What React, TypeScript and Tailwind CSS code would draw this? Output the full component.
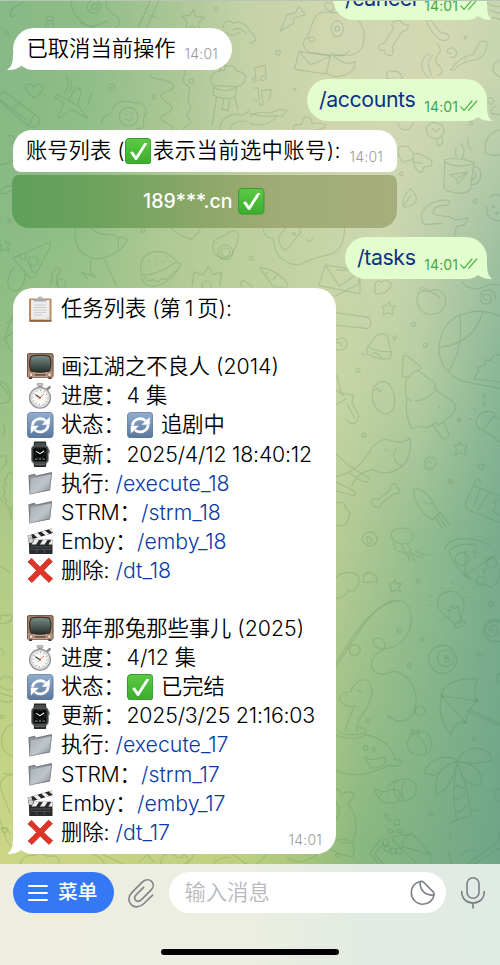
import type { ReactNode } from "react";

const FONT = "font-[Inter,'Noto_Sans_CJK_SC',sans-serif]";

/* ---------- emoji ---------- */

function CheckEmoji() {
  return (
    <svg viewBox="0 0 26 26" className="block size-[26.5px] shrink-0">
      <defs>
        <linearGradient id="ck" x1="0" y1="0" x2="0" y2="1">
          <stop offset="0" stopColor="#5cc944" />
          <stop offset="1" stopColor="#3aae2c" />
        </linearGradient>
      </defs>
      <rect x="0.5" y="0.5" width="25" height="25" rx="3.6" fill="url(#ck)" stroke="#379a35" />
      <path d="M5 14.2 7.6 13l3.2 4.6L19 4.8l3 .3L11.8 21.4 10 21.5Z" fill="#fff" />
    </svg>
  );
}

function RefreshEmoji() {
  return (
    <svg viewBox="0 0 26 26" className="block size-[26.5px] shrink-0">
      <defs>
        <linearGradient id="rf" x1="0" y1="0" x2="0" y2="1">
          <stop offset="0" stopColor="#91aed0" />
          <stop offset="1" stopColor="#59769c" />
        </linearGradient>
      </defs>
      <rect x="0.4" y="0.4" width="25.2" height="25.2" rx="4" fill="url(#rf)" stroke="#5b7698" strokeWidth="0.8" />
      <path d="M5.4 13.2A7.6 7 0 0 1 18.2 8.6M20.6 12.8A7.6 7 0 0 1 7.8 17.6" fill="none" stroke="#fff" strokeWidth="2.7" />
      <path d="M22.3 5v7.6h-8Z M3.7 21.2v-7.6h8Z" fill="#fff" />
    </svg>
  );
}

function ClipboardEmoji() {
  return (
    <svg viewBox="0 0 26 26" className="block size-[26px] shrink-0">
      <rect x="2" y="2.5" width="22.5" height="23" rx="1.2" fill="#b98a5c" />
      <path d="M2.5 25h22" stroke="#6b4a30" strokeWidth="1.2" />
      <path d="M4 4h18.6v19.5H4Z" fill="#ececec" />
      <path d="M4 23.5h14l4.6-4V23.5Z" fill="#d8d8da" />
      <path d="M7 9h12M7 11.5h12M7 14h12M7 16.5h12M7 19h8" stroke="#c9c9cc" strokeWidth="0.9" />
      <path d="M7 5.6V3.4l3.6-.6c.2-3 5-3 5.200 0l3.500.6v2.200Z" fill="#a9adb3" />
      <circle cx="13.200" cy="1.800" r="1" fill="#fff" stroke="#8e9298" strokeWidth="0.500" />
    </svg>
  );
}

function TvEmoji() {
  return (
    <svg viewBox="0 0 26 26" className="block size-[26.5px] shrink-0">
      <defs>
        <linearGradient id="tv" x1="0" y1="0" x2="0" y2="1">
          <stop offset="0" stopColor="#7c9089" />
          <stop offset="0.45" stopColor="#54635f" />
          <stop offset="1" stopColor="#26302e" />
        </linearGradient>
      </defs>
      <rect x="0.4" y="0.6" width="25.200" height="23.400" rx="1.400" fill="#a0806a" stroke="#5d4537" strokeWidth="0.900" />
      <path d="M1 18.500h24v5.400H1Z" fill="#c2a391" />
      <path d="M4 3.200Q13 1 22 3.200 25 10 22 17.600 13 20 4 17.600 1 10 4 3.200Z" fill="url(#tv)" stroke="#33271f" strokeWidth="1" />
      <circle cx="4" cy="21.300" r="1.900" fill="#efd9c8" stroke="#77523a" strokeWidth="0.700" />
      <circle cx="22" cy="21.300" r="1.900" fill="#efd9c8" stroke="#77523a" strokeWidth="0.700" />
      <path d="M7.500 21.500h11" stroke="#5d4537" strokeWidth="1.500" />
      <path d="M2 24h3v1.600H2ZM21 24h3v1.600h-3Z" fill="#46342a" />
    </svg>
  );
}

function StopwatchEmoji() {
  return (
    <svg viewBox="0 0 26 26" className="block size-[26px] shrink-0">
      <path d="M10.800.8h4.400v4.400h-4.400Z" fill="#a3a7ab" />
      <rect x="10" y="0.300" width="6" height="2.600" rx="1" fill="#c5c8cb" stroke="#7e8286" strokeWidth="0.500" />
      <path d="m20.200 6.400 2.400-2.200" stroke="#85898d" strokeWidth="2.600" strokeLinecap="round" />
      <circle cx="13" cy="14.700" r="10.400" fill="#e7e8e9" stroke="#909497" strokeWidth="1.300" />
      <circle cx="13" cy="14.700" r="8.400" fill="#fbfaf6" stroke="#b9bbbd" strokeWidth="0.600" />
      <circle cx="13" cy="14.700" r="7" fill="none" stroke="#77797c" strokeWidth="1.200" strokeDasharray="0.700 2.965" />
      <path d="m13 14.700-4.600-3" stroke="#333" strokeWidth="1.100" />
      <path d="m11.500 16 5.500-5" stroke="#d86058" strokeWidth="0.800" />
      <circle cx="13" cy="14.700" r="1" fill="#b95149" />
    </svg>
  );
}

function WatchEmoji() {
  return (
    <svg viewBox="0 0 26 26" className="block size-[26.500px] shrink-0">
      <path d="M7 .4h11.500l1 6.600H6ZM6 19h13.500l-1 6.700H7Z" fill="#26292a" />
      <path d="M7.600 2.900h10.400M7.600 23.200h10.400" stroke="#83898a" strokeWidth="0.700" />
      <rect x="4.400" y="4.700" width="16.600" height="17" rx="3.400" fill="#383c3d" stroke="#777d7e" strokeWidth="0.700" />
      <rect x="6.500" y="6.600" width="12.400" height="13.200" rx="1.500" fill="#050606" />
      <rect x="20.800" y="8" width="1.300" height="4" rx="0.600" fill="#555" />
      <circle cx="12.700" cy="12" r="4.700" fill="none" stroke="#777" strokeWidth="0.800" strokeDasharray="0.700 1.300" />
      <path d="m9 10.200 3.700 2.200 4-2.600" fill="none" stroke="#fff" strokeWidth="1" />
      <path d="M7.800 17.800h2.600M11.700 17.800h2.200M15.200 17.800h2.300" stroke="#7e8788" strokeWidth="1.400" />
    </svg>
  );
}

function FolderEmoji() {
  return (
    <svg viewBox="0 0 26 26" className="block size-[26px] shrink-0">
      <defs>
        <linearGradient id="fd" x1="0" y1="0" x2="1" y2="1">
          <stop offset="0" stopColor="#a7adb3" />
          <stop offset="0.550" stopColor="#c0c5ca" />
          <stop offset="1" stopColor="#858c94" />
        </linearGradient>
      </defs>
      <path d="M1.400 5.200 7.600 3.700l1.700 1.700L24.700 1.900l.3 1.500-2 17L2.500 24.200Z" fill="#73797f" />
      <path d="M2.600 6.500 8 5.200l1.500 1.600L24 3.600l-.5 4L3 13Z" fill="#959ba1" />
      <path d="M3.400 8.300 24.400 4l-1.800 15.500L2.700 24.200Z" fill="url(#fd)" stroke="#80868c" strokeWidth="0.500" />
    </svg>
  );
}

function ClapperEmoji() {
  return (
    <svg viewBox="0 0 26 26" className="block size-[26.500px] shrink-0">
      <path d="M.5 7.500 23.800.6l1.600 4.300L2 12Z" fill="#252627" />
      <path d="m6.200 5.900 4 3.600 4-1.200-4-3.600ZM14 3.600l4 3.500 3.700-1.100-4-3.500ZM21.400 1.400l3.600 3.300.3-.3-1.500-3.700Z" fill="#f1f1f1" />
      <path d="M.6 7.500 4.200 6.500 5.600 10.900 2 12Z" fill="#d1d3d4" />
      <path d="M1.800 11.600H25v13.800H2.200Z" fill="#292a2b" />
      <path d="m7.300 11.600-2.900 4.500h4.500l3-4.500ZM15.700 11.600l-3 4.500h4.600l3-4.500ZM24 11.600l-3 4.500h4v-4.500Z" fill="#eee" />
      <circle cx="3.700" cy="12.200" r="2.500" fill="#ced1d2" stroke="#707476" strokeWidth="0.500" />
      <path d="M3.400 18.600h20.400M3.400 21h20.400M9.500 21v3.500M17 21v3.500" stroke="#66696b" strokeWidth="0.600" />
    </svg>
  );
}

function CrossEmoji() {
  return (
    <svg viewBox="0 0 26 26" className="block size-[26.500px] shrink-0">
      <path
        d="M4.500 1.200Q8.600 6 12.800 9.800 17 5.500 21.200 1.100L25 4.600Q20.200 8.800 16.500 13.100 20.500 17.600 25.200 21.200L21.600 25Q17 20.700 13 16.700 9 20.900 4.800 25.100L1 21.500Q5.500 17.500 9.300 13.200 5.500 8.800.9 5Z"
        fill="#df3529"
        stroke="#b82a20"
        strokeWidth="0.700"
      />
    </svg>
  );
}

/* ---------- wallpaper ---------- */

function Wallpaper() {
  return (
    <div className="absolute inset-x-0 top-0 h-[864px] overflow-hidden">
      <div className="absolute inset-0 bg-[linear-gradient(90deg,#ccd685_0%,#bfd07d_48%,#a4c47c_62%,#8ab881_72%,#6fa688_100%)]" />
      <div className="absolute inset-0 bg-[linear-gradient(90deg,#afcb87_0%,#c3d294_50%,#b6cc94_68%,#94bd90_84%,#79ac8c_100%)] mask-[linear-gradient(180deg,black_0,black_540px,transparent_850px)]" />
      <div className="absolute inset-0 bg-[linear-gradient(90deg,#94bf86_0%,#b0ca90_35%,#c8d5a7_68%,#b7cea3_84%,#8bb796_100%)] mask-[linear-gradient(180deg,black_0,black_370px,transparent_540px)]" />
      <div className="absolute inset-0 bg-[linear-gradient(90deg,#8bbb85_0%,#93bf88_16%,#aec994_32%,#becf9e_50%,#ced8b0_76%,#bed0ac_86%,#a0c1a1_100%)] mask-[linear-gradient(180deg,black_0,black_240px,transparent_370px)]" />
      <div className="absolute inset-0 bg-[linear-gradient(90deg,#87b885_0%,#90bd89_18%,#a9c695_34%,#c5d1a9_49%,#cfd6b0_65%,#d4d9b4_88%,#c7d5b0_100%)] mask-[linear-gradient(180deg,black_0,black_80px,transparent_240px)]" />
      <svg
        viewBox="0 0 500 864"
        className="absolute inset-0 h-[864px] w-[500px]"
        fill="none"
        stroke="#42784a"
        strokeOpacity="0.2"
        strokeWidth="3.4"
        strokeLinecap="round"
        strokeLinejoin="round"
      >
        {/* top left: dinosaur, heart, plane, egg, scarf friend */}
        <g transform="scale(.33333)">
          <path d="M72 0C60 20 28 22 30 42q4 12 14 4M215 0c-6 30 20 60 40 72 40 20 84 28 102 2 6-14-6-30-20-32M320 0c-4 20 0 30 18 42M240 66q34 24 78-2" />
          <circle cx="282" cy="20" r="20" />
          <circle cx="284" cy="20" r="9" />
          <path d="M136 84l4-30q8-12 18 0l4 30M138 62h22M138 72h22M440 82l38-82M416 80l36-80M452 46l18 8" />
          <path d="m580 28 8 22 26 2-20 16 6 24-22-14-22 12 6-24-16-18 24-2Z" />
          <path d="M670 84c0-24 20-26 30-14 20-10 40 4 50 24M700 90q20-12 40 12M680 96q10 20 40 0" />
          <circle cx="650" cy="26" r="5" />
          <circle cx="20" cy="100" r="5" />
          <path d="M103 294C85 280 75 268 78 259c6-11 20-9 24 3 4-12 22-14 26 0 2 12-10 22-25 32Z" />
          <path d="M0 304 84 378q22 10 34-8 2-20-16-28L14 276l-14 8M84 378l20-36M40 322l22-18M0 300l80 60" />
          <path d="M206 300 226 264q16-2 18 14l-12 36 32 42-50-28-36 28-4-8 18-38-28-18 6-8ZM202 300l26 14" />
          <path d="M200 230q10 26-6 50M212 240q4 20-2 36M276 276l-12 38" />
          <path d="M326 254q18-8 20 8-4 14-18 8 0-8 8-8M304 372c2-30 30-20 36-48 10-28 44-22 60-16 34-4 46 22 32 44-6 24 10 32-20 34" />
          <circle cx="386" cy="350" r="28" />
          <path d="M374 354q12 16 26 0M378 342v4M394 340v4" />
          <path d="M452 222c-10 22 60 10 68 34 4 24-50 14-34 40 16 16 42 20 24 38-20 16-44 16-12 34 14 10 20 8 18 20M544 200c30 16-10 36 12 52 30 16-2 38 10 56 22 16-24 36 4 50 10 12-16 20-20 30" />
          <circle cx="574" cy="244" r="7" />
          <circle cx="462" cy="292" r="5" />
          <path d="M634 234q2-18 24-20 8-30 26-14 20-8 24 12 36 8 28 24-4 22-32 24l-60-4q-16-4-10-22ZM640 262q34 20 70-2l-4 30q-34 14-66-4ZM650 290l-14 86M672 294l-6 34 18 4 6-36M704 290l10 40" />
          <circle cx="668" cy="204" r="8" />
          <path d="M660 388c0-36 38-50 60-44s20-14 30-14M690 388q10-30 50-24M26 408q14-6 18 8-2 14-14 10M0 492q20 4 34-14M0 580q8-30 44-20-18 26-44 20" />
          <circle cx="28" cy="662" r="5" />
        </g>
        {/* top right: dog with envelope, bones, notes, mug */}
        <g transform="translate(250 0) scale(.33333)">
          <path d="m90 94 22-50 22-4 14-20 18 24-34 10-2 16Z" />
          <circle cx="84" cy="158" r="7" />
          <path d="M190 62c14-34 36-26 60-24 60-4 96 30 92 76 0 60-50 54-100 52l-60-8c-26-14-28-32-10-48ZM236 32q18 10 14-20l-20-6q-14 16 6 26Z" />
          <ellipse cx="262" cy="86" rx="18" ry="24" />
          <circle cx="262" cy="86" r="7" />
          <path d="M174 114q18-8 20 6-8 14-20-6M244 160q34 14 54-8M146 154l96 14-14 54-94-14ZM146 154l36 40 60-26M250 168q40 34 66 16 0 44-62 46l-28-10" />
          <path d="M388 148q-6-18 14-18l28-44q-12-22 8-22 6-8 16 2 6 10 20 8 4 20-18 20l-30 48q10 24-8 24-18-2-14-16-16 4-16-2ZM530 60c20-12 22 36 52 40 20 0 20 20 0 22-24 0-52-50-52-62ZM600 210q30-40 70-48l20-38h20q6 40-32 56-36 0-68 30ZM540 162c-30 6-34 50-4 70M560 130q20 16 4 34t4 34-4 30M548 166c-22 20-10 40-4 60M604 160q-20 0-8-14 20-8 24 12-2 20-20 12M0 96l8 4 10 20-18 10M14 202l32-6 2 38q-8 14-16 4-2-12 14-10M14 206l4 36q-12 12-10-6l10-4M10 264l14 0 4 34q-10 10-18 0M34 272l30-4-8 36M34 276l6 36q-14 10-12-6" />
          <circle cx="646" cy="112" r="4" /><circle cx="134" cy="268" r="4" />
          <path d="M0 350q20-20 60-10l32-12 18 4-12 16-16 0q-30 36-82 22M0 340q40 14 80 6M130 390q0-24 22-14l12-24q22-6 22 20 24-6 42 4-10 14-30 14M410 234q-4-26 20-20 18-4 28 20-20 12-48 0M444 370c8 30 40 20 44 0M700 0q20 20 50 20M714 30l36 10M720 60q10-16 30 0M750 180q-26 10-20 36l20 16" />
          <path d="M530 384q10-26 44-10 20 24-10 42h-14q-26-12-20-32ZM560 414l4 24 14-8-2-18M548 386q10 16 20 0M448 440l26-2 18 24 14-2 40 22-2 16-22 2-6 18q-24-6-28-40l-30 8q-20-24-10-46M490 462v24l26 4" />
          <path d="M584 480q40-12 88 8l-10 76q-4 16-40 16-40-6-40-18ZM584 486q30 20 86 6M670 500c32-4 30 60-8 54M668 514c14 0 12 28-4 26M600 524l54-8-30 36-4-16ZM620 536l34-20M620 444q-8 10 0 26M634 432q16 18 2 42M656 414q-8 20 8 36M706 460q-6-60 44-70M706 460q20 10 44 4M712 296q16-10 20 8-10 18-18 0M740 320q-20-2-16 20l26 4" />
          <circle cx="454" cy="522" r="5" /><circle cx="676" cy="604" r="6" />
          <path d="M460 620q-6-30 22-54 24 26 14 42-20 16-36 12ZM462 616l20-30M598 602q-30-6-60 12-40 26-14 60l50-4M598 602q4 16-16 14-30 0-34 24 20 10 50 10l20 10 36-6-10 20-24 6-10 40M720 590q26-14 30 0M710 620q-4 40 40 42" />
          <circle cx="730" cy="620" r="3" /><circle cx="740" cy="640" r="3" /><circle cx="664" cy="370" r="5" />
        </g>
        {/* strip between the account list and the task list */}
        <g transform="translate(0 225) scale(.33333)">
          <path d="m14 44 4 12 14 0-10 10 6 14-14-8-12 6 2-14-4-10M38 100l104-46q14-4 8 12l-46 88q-10 10-18 0ZM60 88q-2 18 16 16 4-12-2-22M104 144q-16-10-12-30M44 128c-18 12-30 50-10 68 30 10 44-24 40-60M150 180q10-20 4-30l20-24q14 14-4 30l4 30" />
          <circle cx="99" cy="108" r="15" /><circle cx="184" cy="176" r="14" />
          <path d="M228 0c-8 50 0 90 60 102 50-4 80-30 94-58-16-10-24-10-30 2M270 0q10 30 70 30M272 102v40l14 14M244 142l42 12M248 146l14 16M314 104l36 80M340 30q20 6 14 44" />
          <circle cx="429" cy="16" r="6" />
          <path d="M424 150c-8-44 10-72 54-70 34 4 54 28 50 32q-60 42-104 38ZM528 112q20 0 10 16l-40 36-14-4-10 12-14-8-18 4-8-12M424 158q12 30 40 26 50-10 74-58" />
          <path d="M446 108v2M470 94v2M492 108v2M470 118v2M450 130v2M500 94v2M515 10q24 24 60 34 20-20 32-44M500 0q10 10 16 10" />
          <path d="M692 20q20-8 24 10-2 24-16 50-18 32-46 14-26-16-10-48 18-10 48-26Z" />
          <circle cx="676" cy="82" r="22" /><circle cx="676" cy="82" r="13" /><circle cx="754" cy="99" r="6" /><circle cx="620" cy="182" r="14" />
          <path d="m576 184 6-44 26 10 18-26 14 24 24-6-4 40M724 184q-4-22 10-16l24 18M780 128q50 4 84 50l-4 8h-40ZM804 142l-10 10M830 150l-10 14" />
          <path d="M790 0q-4 40 30 40 4 76 76 80 50-24 104-34 40-30 32-86M836 36l22-30q40-8 44 16l-40 50q-20 10-26-36M918 44q14 14 20-6" />
          <circle cx="882" cy="26" r="4" />
          <path d="m976 120 104 16v70l-124-24ZM976 120l42 64 62-42" />
        </g>
        {/* right column, upper part */}
        <g transform="translate(330 230) scale(.33333)">
          <path d="M20 120l70 2-4 40-70 36M136 190q-8-46 20-34 8-14 28 4-2 26-38 32ZM398 156q10 22 50 20 40-20 62-10M400 130q30-12 60 0" />
          <path d="M296 184c-28-8-38 10-34 32 4 36 36 38 44 36 36 2 44-36 40-48-2-24-34-30-50-20ZM268 178q14-12 28 6M296 184q20 4 34 22" />
          <path d="m176 216 6 12 14 0-10 12 4 14-16-6-14 6 2-14-6-12 14-2ZM470 210q-14-4-10-14 20-10 24 10-4 20-24 14-16-10-6-34 40-20 44 24" />
          <circle cx="250" cy="283" r="6" /><circle cx="286" cy="346" r="6" /><circle cx="84" cy="421" r="6" /><circle cx="102" cy="616" r="6" />
          <path d="M18 248l98 14q14 20-2 34l-94-10M110 354q14-16 26-34 20-16 36-4l12 54-4 16q-34 6-68-14ZM112 350q36 18 70 14M128 372q10-10 26 10M188 320q8 4 2 10M198 316q4 8-4 14M96 370l8 4" />
          <path d="M510 260c-60-30-140-16-170 40-30 70-6 130 60 154l110 22M330 352q100-10 128-106M356 422c30-40 40-100 34-168M510 456l-80-10 16-20-4-12 22-8 2-16 14 2 14-20 16 4" />
          <path d="M220 378q4-6 12 0l38 30q6 12-6 14-18 4-28 20l-20-2ZM230 440q-8 40 0 66l14 6M264 422l42 30q16 10 8 28 62 34 64 50-8 32-26 34-20 28-38 14-20 24-42 10-20 10-28 6-22-46-12-88M258 512q30 0 50-24M310 586l28 40q14 4 20-12l-18-38M328 528v6" />
          <path d="M160 454c36 4 50 92 10 98-50-4-60-94-10-98ZM132 482l10-8 6 12 8-8M20 436l14 52 36 8-4 22 20 40q-4 30-28 20l-10-12M50 520l24 44M18 480l26 18M18 524l30-18M18 330q26-16 34 10-4 26-34 18M18 340q20-8 16 10" />
          <path d="m438 570q12-26 36-26 20 0 20 12l-34 44q-22 0-22-30ZM460 600l50 36M494 560l16 8M460 514l6 14M430 536l8 6M418 568h8" />
          <circle cx="462" cy="497" r="5" /><circle cx="387" cy="571" r="5" /><circle cx="454" cy="710" r="8" /><circle cx="362" cy="754" r="6" />
          <path d="M18 740q60-12 90-60 34-60 70-50 40 14 62-6 8 50-22 84-50 36-90 10-50 10-62 50M200 654c-20 20 0 54 18 52M18 672l40 36 60 36q0 14-20 10l-36-22M18 756l56 28q8 16-10 12l-46-14M120 670l4-4M166 660h6" />
          <path d="m390 634 6 14 16 0-8 12 6 16-18-8-16 8 4-18-10-12 14 0ZM304 700q-8-14-16 0 4 18 20 14 20-14 4-30-24-10-30 16 0 24 24 20M124 812q8-10 22-4l34-28q0-20 18-18l4 12q14 6 4 16-12 0-18 4l-34 26q0 16-14 12-16-4-16-20Z" />
          <path d="M252 780c8-14 50 14 58 42l18 30-20 16c-30-10-60-60-56-88ZM280 814q20 16 28 2M316 860l20 36M324 856l24 36M330 848l28 36M430 768l80 28M430 768l-24 52 4 18 100 40M450 776l-18 54M430 764l12-18 12 10M476 790l-34 52M510 806l-18 10 8 16-12 8 22 20" />
          <path d="M18 820q30-10 28 14 20 10 10 28-4 32-38 24M112 934q-8-12 4-14 14 6 6 18-18 12-26-8 4-30 34-22 20 20 4 34-10 10-24 4M190 934q-20-40 30-40 40 8 22 42-26 12-44 0ZM192 940l4 20M214 940l6 20M230 940l14 20M344 960c8-40 80-44 134-14M360 960q30-26 80-14" />
        </g>
        {/* right column, lower part */}
        <g transform="translate(330 550) scale(.33333)">
          <path d="M204 4q30 0 36 30M222 2q20 8 34 30M238 4q18 16 44 20M258 4q20 14 40 10M356 4q30 80 130 108 30-20 24-70M406 0v76M406 76l90-60M400 76q14 8 20 10" />
          <circle cx="396" cy="27" r="20" /><circle cx="484" cy="38" r="16" /><circle cx="452" cy="92" r="13" />
          <path d="m436 20-6-16 14 4M466 72l-10-10 14-4M18 82q20-20 54-12 26 14 8 42-8 14-26 10-10 20-36 24M100 94q-4-26 20-26 24 6 20 28-20 0-24 0-14 4-16-2ZM194 90l6 12 14-2-8 12 6 12-16-4-12 6 0-16-8-8 14-2Z" />
          <circle cx="264" cy="93" r="5" /><circle cx="483" cy="162" r="7" /><circle cx="276" cy="269" r="5" /><circle cx="209" cy="241" r="7" /><circle cx="238" cy="347" r="6" /><circle cx="445" cy="312" r="6" /><circle cx="114" cy="511" r="6" /><circle cx="433" cy="566" r="5" /><circle cx="303" cy="791" r="5" />
          <path d="M336 188C312 160 322 128 356 124c36-2 52 30 44 56-6 14-8 20-6 32l-24 8c-6-12-20-18-34-32ZM362 208l-10-30 10 4 2-16 10 10 8-8 10 40M372 220l4 12q10 6 26-6l2-14M376 222q14 0 26-10M334 112l2 4M368 94v6M400 110l-4 4M412 140l-6 2M300 138l6 2M302 166h-4M326 204v2" />
          <path d="M490 240q-14 4-12-8 18-14 26 6-2 24-24 22-20-14-12-32 20-24 42-10M510 212q-46-12-50 30 8 40 50 32" />
          <path d="M18 352C90 234 130 170 190 154q50-10 54 50c0 56-40 92-82 92-30 0-40-20-28-30 20-8 34 8 30 30q-40 20-40 50c4 24 30 34 56 20 40-8 66 30 76 60 10 50-10 96-60 86l-12-10q-20 4-6-6M18 340C80 236 130 170 190 150M58 296q10-20 28-8 12 18-6 28-22 6-22-20Z" />
          <circle cx="270" cy="483" r="15" /><circle cx="338" cy="328" r="42" /><circle cx="347" cy="325" r="25" /><circle cx="349" cy="320" r="5" /><circle cx="352" cy="329" r="6" />
          <path d="M442 386q-106 0-106 52c-16 40 4 90 28 118 0-22 12-42 42-38q8-36 34-66-12-26 2-66ZM336 438l70 80M336 438l104 14M416 476l94 46M412 484l98 44M510 370q-14 10-8 26" />
          <circle cx="336" cy="438" r="4" /><circle cx="441" cy="452" r="4" /><circle cx="405" cy="517" r="4" />
          <path d="M46 466c-30-20-18-40 14-40 20-50 68-48 66 0-4 56-50 74-46 120M46 466q24 6 30 0-14 24-30 74M22 540q10 20 80 12 16-20-18-18M18 556q60 20 90-2 80 20 86 74l22 4q-4 24-40 14-96 48-158 14M104 622q20 14 60-2 10 34-40 34ZM48 432v6M84 420q6 4 10 8" />
          <circle cx="107" cy="593" r="7" /><circle cx="131" cy="598" r="5" />
          <path d="M264 552c-36-6-44 54-10 60 50 14 64-30 40-60-10-12-20-10-30 0ZM240 552l10-4-10-6 14-2 4 14 6-16 4 8M262 554q26 22 28 52M174 714c10-30 80-40 84-4 6 30-20 46-50 42M200 690q-20 32 8 62M226 690q-20 30-4 62M134 714q14 16 40 8 40-14 36 20-6 24-44 16-30-14-32-44ZM150 732l4 4M176 740v4" />
          <path d="M384 634c-20-26-96-10-100 34 20 10 40 10 50-8 20-22 50-26 50-26ZM384 630c20-44 94-50 102 2q-50 14-102 2ZM382 636c-40 8-76 40-62 98 40-20 50-54 62-98 54 0 80 36 70 72-50-4-62-34-70-72M378 660q-14 80 2 150l44-14q-10-70-30-130M370 716l14-10 20 10M370 748l20-2 16-14M374 782l18 2 18-16M440 780h-16M380 810l-18 10" />
          <path d="M18 720q10-10 14 14 20-14 40-4-4 20-20 30 40 40 18 114-10 8-36 4M18 870q70-10 50 50-26 0-66-22M18 754q20 30 0 54" />
          <circle cx="22" cy="916" r="5" /><circle cx="201" cy="817" r="9" /><circle cx="167" cy="878" r="9" /><circle cx="172" cy="896" r="9" /><circle cx="190" cy="903" r="9" /><circle cx="206" cy="903" r="9" />
          <path d="M164 792q10-4 18 22-8 6-18-22ZM172 844q10-14 18 2-8 8-18-2ZM200 844q8-12 18 0-8 12-18 0ZM154 866l-34 42 24 32M160 880l-26 30 24 30M180 864l66-14q-30 10-30 40l88 24-4 26M246 850l58 64M186 868l74 72M364 940l-8-30M362 844q-6 10 0 20M410 944l82-60q18-10 14-40M390 920q14-24 50-20M430 944l80-50M510 720q-20-20-18 4 0 30 18 30" />
        </g>
        {/* left strip and bottom strip */}
        <g transform="translate(0 230) scale(.33333)">
          <path d="M40 250l-26 76 22 42M20 280l20-20M14 326l26-20M0 454q20 0 34 40-6 30-34 26M0 460l30 40M8 580q14 14 0 40M0 680q20-8 20 8 0 20-20 34M40 730q-20-6-18 12-14 8-4 20-14 10-2 24-10 14 4 24-10 14 8 24 0 20 12 18M0 806q8 0 8 10M36 830q-10 40 4 40" />
        </g>
        <g transform="translate(0 560) scale(.33333)">
          <path d="M0 20l30 16M0 180q4-22 20-12 16-14 16 6-6 20-36 16M0 264q14 6 8 24M0 360q10-20 20-8 20-6 16 14M0 380q20 14 38 8M0 400l36 10M0 420q20 12 38 2M40 490c-50 20-44 90 0 100M12 640l26 6M40 640q-40 12-40 40l30 80M0 780l20 60q10 20 30 30M0 806q20-10 30 16" />
          <circle cx="6" cy="470" r="5" /><circle cx="14" cy="810" r="8" />
          <path d="M60 912q10-30 44-26 20-10 40 4 34-10 34 22M280 884q20 4 34 28M310 884l60 28M418 906l24-22 20 22M482 912q4-40 40-28 14 20 30 0 20 10 6 28M580 884q-4 20-26 28M640 912q14-22 50-20M700 884l40 28M800 884l-30 28M860 892q40 30 90-8" />
        </g>
      </svg>
    </div>
  );
}

/* ---------- bubbles ---------- */

function TailLeft() {
  return (
    <svg viewBox="0 0 18 18" className="absolute bottom-0 -left-[6px] size-[18px]" fill="#fff">
      <path d="M6 0C6 9 5.500 14.500.6 17.200c-.4.3-.3.8.3.8 5.500 0 10.500-1.400 14-4.500Z" />
    </svg>
  );
}

function TailRight() {
  return (
    <svg viewBox="0 0 18 18" className="absolute -right-[5px] bottom-0 size-[18px]" fill="#e3fece">
      <path d="M13 0c0 9 .5 14.500 4.600 17.200.4.300.3.800-.3.800-5.500 0-10-1.400-14-4.500Z" />
    </svg>
  );
}

function Ticks() {
  return (
    <svg viewBox="0 0 18 12" className="block h-[12px] w-[18px] shrink-0" fill="none" stroke="#4db545" strokeWidth="1.200" strokeLinecap="round" strokeLinejoin="round">
      <path d="M.8 6.800 4 10.400 12 1M8.600 10.300 16.800 1" />
    </svg>
  );
}

function Outgoing({ text, className }: { text: string; className: string }) {
  return (
    <div className={`relative mr-[13px] ml-auto flex h-[42px] shrink-0 items-center rounded-[21px] bg-[#e3fece] pl-[12px] ${className}`}>
      <TailRight />
      <span className="mb-[2px] leading-[40px] tracking-[-0.400px] text-[#0b3186]">{text}</span>
      <span className="mt-[13px] ml-auto text-[14px] leading-[16px] tracking-[0.100px] text-[#48a443]">14:01</span>
      <span className="mt-[12px] mr-[9px] ml-[2px]">
        <Ticks />
      </span>
    </div>
  );
}

function Row({ icon, label, labelClass = "", children }: { icon: ReactNode; label: ReactNode; labelClass?: string; children?: ReactNode }) {
  return (
    <div className="flex h-[29.100px] items-center leading-[29px] whitespace-pre">
      <span className="flex w-[34px] shrink-0 items-center">{icon}</span>
      <span className={`shrink-0 ${labelClass}`}>{label}</span>
      {children}
    </div>
  );
}

type Task = { title: string; progress: string; done: boolean; status: string; updated: string; id: string };

const tasks: Task[] = [
  { title: "画江湖之不良人 (2014)", progress: "4 集", done: false, status: "追剧中", updated: "2025/4/12 18:40:12", id: "18" },
  { title: "那年那兔那些事儿 (2025)", progress: "4/12 集", done: true, status: "已完结", updated: "2025/3/25 21:16:03", id: "17" },
];

function TaskBlock({ task }: { task: Task }) {
  const link = "text-[#0b3aa5]";
  return (
    <div className="mt-[29.100px]">
      <Row icon={<TvEmoji />} label={task.title} />
      <Row icon={<StopwatchEmoji />} label="进度：" labelClass="w-[65.500px]">
        <span>{task.progress}</span>
      </Row>
      <Row icon={<RefreshEmoji />} label="状态：" labelClass="w-[65.500px]">
        {task.done ? <CheckEmoji /> : <RefreshEmoji />}
        <span className="ml-[8px]">{task.status}</span>
      </Row>
      <Row icon={<WatchEmoji />} label="更新：" labelClass="w-[65.500px]">
        <span className="tracking-[-0.200px]">{task.updated}</span>
      </Row>
      <Row icon={<FolderEmoji />} label="执行:" labelClass="w-[54.500px]">
        <span className={link}>/execute_{task.id}</span>
      </Row>
      <Row icon={<FolderEmoji />} label="STRM：" labelClass="w-[80px] tracking-[-0.300px]">
        <span className={link}>/strm_{task.id}</span>
      </Row>
      <Row icon={<ClapperEmoji />} label="Emby：" labelClass="w-[76px] tracking-[-0.300px]">
        <span className={link}>/emby_{task.id}</span>
      </Row>
      <Row icon={<CrossEmoji />} label="删除:" labelClass="w-[54.500px]">
        <span className={link}>/dt_{task.id}</span>
      </Row>
    </div>
  );
}

export default function App() {
  return (
    <div className={`relative h-[965px] w-[500px] overflow-hidden text-[21.300px] text-black ${FONT}`}>
      <Wallpaper />
      <div className="relative flex h-[864px] flex-col overflow-hidden border-t border-[#b9c5b4]">
        <Outgoing text="/cancel" className="-mt-[23px] w-[154px]" />

        <div className="relative mt-[8px] ml-[13px] flex h-[42px] w-[219px] shrink-0 items-center rounded-[21px] bg-white pl-[13.500px] font-[350]">
          <TailLeft />
          <span className="mb-[1px] leading-[41px]">已取消当前操作</span>
          <span className="mt-[9px] mr-[14px] ml-auto text-[14px] leading-[16px] tracking-[0.200px] text-[#98989c]">14:01</span>
        </div>

        <Outgoing text="/accounts" className="mt-[9px] w-[180px]" />

        <div className="mt-[9px] ml-[13px] flex h-[42px] w-[384px] shrink-0 items-center rounded-t-[19px] rounded-br-[8px] rounded-bl-[8px] bg-white pl-[13px] font-[350]">
          <span className="mb-[1px] leading-[41px]">账号列表 (</span>
          <CheckEmoji />
          <span className="mb-[1px] ml-[2px] leading-[41px] tracking-[0.400px]">表示当前选中账号):</span>
          <span className="mt-[11px] mr-[14px] ml-auto text-[14px] leading-[16px] tracking-[0.200px] text-[#98989c]">14:01</span>
        </div>
        <div className="mt-[3px] ml-[12px] flex h-[53px] w-[385px] shrink-0 items-center justify-center gap-[6px] rounded-t-[7px] rounded-b-[17px] bg-[linear-gradient(90deg,#5fa05b_0%,#6ba25c_20%,#8fa869_52%,#a0ab75_68%,#a6af7c_100%)] pr-[1px]">
          <span className="text-[19.500px] leading-[53px] font-medium text-white">189***.cn</span>
          <CheckEmoji />
        </div>

        <Outgoing text="/tasks" className="mt-[9px] w-[142px]" />

        <div className="relative mt-[9px] ml-[13px] h-[566px] w-[323px] shrink-0 rounded-[20px] bg-white pt-[6px] pl-[14px] font-[350]">
          <TailLeft />
          <Row
            icon={<ClipboardEmoji />}
            label={
              <>
                任务列表 (第<span className="mx-[4px]">1</span>页):
              </>
            }
          />
          {tasks.map((t) => (
            <TaskBlock key={t.id} task={t} />
          ))}
          <span className="absolute right-[14px] bottom-[6px] text-[14px] leading-[16px] tracking-[0.200px] text-[#98989c]">14:01</span>
        </div>
      </div>

      <div className="relative h-[101px] bg-[linear-gradient(90deg,#eeeee0_0%,#ebeee1_50%,#e1ebe3_75%,#e0ebe4_100%)] pt-[8px]">
        <div className="flex h-[41px] items-center pl-[13px]">
          <div className="flex h-[41px] w-[101px] items-center rounded-full bg-[#3478f6] pl-[15px] text-white">
            <svg viewBox="0 0 20 16" className="h-[16px] w-[20px]" stroke="currentColor" strokeWidth="1.900" strokeLinecap="round">
              <path d="M1 1h18M1 8h18M1 15h18" />
            </svg>
            <span className="ml-[10px] text-[19.700px] leading-[41px] font-medium">菜单</span>
          </div>
          <svg viewBox="0 0 28 32" className="ml-[13px] h-[32px] w-[28px]" fill="none" stroke="#82868c" strokeWidth="1.700" strokeLinecap="round" strokeLinejoin="round">
            <path d="M25.600 18.200 17 26.500c-4 4-9.200 4.300-12.600 1.300C.8 24.300 1.200 19.300 4.800 15.700L15.200 5.200c3-3 7-3.200 9.400-.9 2.400 2.400 2.200 6-.6 8.800l-9.600 9.600c-1.800 1.800-4.200 1.900-5.600.6-1.500-1.500-1.300-3.800.5-5.600l7.300-7.300" />
          </svg>
          <div className="ml-[13.500px] flex h-[41px] w-[277px] items-center rounded-full bg-white pl-[16px] font-[350]">
            <span className="leading-[41px] text-[#b9b9bd]">输入消息</span>
            <svg viewBox="0 0 26 26" className="mr-[10px] ml-auto size-[26px]" fill="none" stroke="#7b7f87" strokeWidth="1.600" strokeLinejoin="round">
              <path d="M10.200 1.500C4.900 2.500 1.300 7 1.300 12.700c0 6.300 5.100 11.500 11.400 11.500 5.800 0 10.500-3.900 11.400-9.400.2-1.100-.1-2-.9-2.900L13.600 2.300c-.9-.9-2-1.100-3.400-.8Z" />
              <path d="M10.200 1.500c-.7 8.300 4.500 14 13.900 13.600" />
            </svg>
          </div>
          <svg viewBox="0 0 26 34" className="ml-[14px] h-[34px] w-[26px]" fill="none" stroke="#7b7f87" strokeWidth="1.600" strokeLinecap="round">
            <rect x="7" y="1.800" width="12" height="20.500" rx="6" />
            <path d="M1.700 15.500c0 7 4.800 11.500 11.300 11.500s11.300-4.500 11.300-11.500M13 27v5" />
          </svg>
        </div>
        <div className="mx-auto mt-[35.500px] h-[6px] w-[178px] rounded-full bg-black" />
      </div>
    </div>
  );
}
